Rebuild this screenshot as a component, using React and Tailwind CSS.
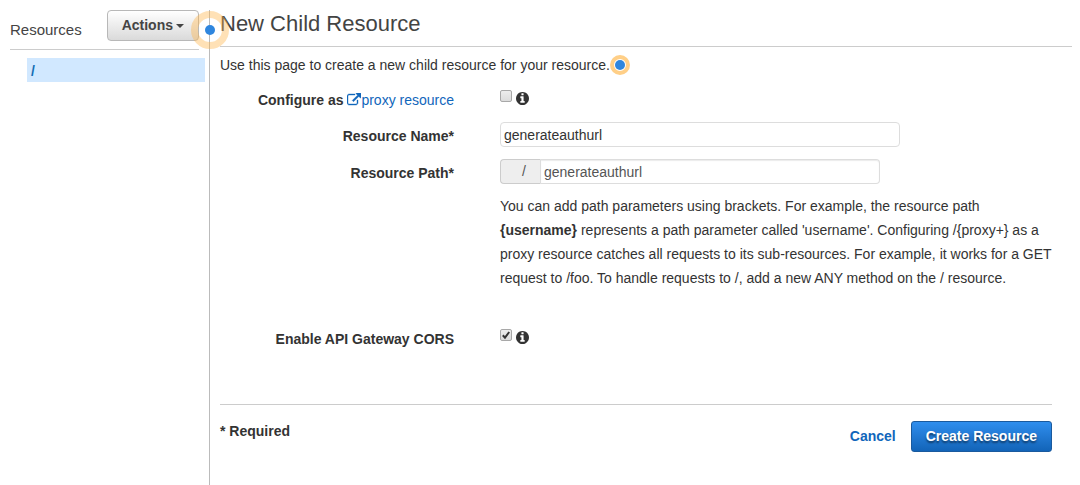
import { useState } from "react";

function InfoIcon() {
  return (
    <svg viewBox="128 128 1536 1536" className="size-[13px] shrink-0" fill="currentColor" role="img" aria-label="Information">
      <path d="M1152 1376v-160q0-14-9-23t-23-9h-96v-512q0-14-9-23t-23-9h-320q-14 0-23 9t-9 23v160q0 14 9 23t23 9h96v320h-96q-14 0-23 9t-9 23v160q0 14 9 23t23 9h448q14 0 23-9t9-23zm-128-896v-160q0-14-9-23t-23-9h-192q-14 0-23 9t-9 23v160q0 14 9 23t23 9h192q14 0 23-9t9-23zm640 416q0 209-103 385.5t-279.5 279.5-385.5 103-385.5-103-279.5-279.5-103-385.5 103-385.5 279.5-279.5 385.5-103 385.5 103 279.5 279.5 103 385.5z" />
    </svg>
  );
}

function ExternalLinkIcon() {
  return (
    <svg
      viewBox="0 0 1792 1792"
      className="inline-block size-3.5 align-[-2px]"
      fill="currentColor"
      stroke="currentColor"
      strokeWidth="50"
      aria-hidden="true"
    >
      <path d="M1408 928v320q0 119-84.5 203.5t-203.5 84.5h-832q-119 0-203.5-84.5t-84.5-203.5v-832q0-119 84.5-203.5t203.5-84.5h704q14 0 23 9t9 23v64q0 14-9 23t-23 9h-704q-66 0-113 47t-47 113v832q0 66 47 113t113 47h832q66 0 113-47t47-113v-320q0-14 9-23t23-9h64q14 0 23 9t9 23zm384-864v512q0 26-19 45t-45 19-45-19l-176-176-652 652q-10 10-23 10t-23-10l-114-114q-10-10-10-23t10-23l652-652-176-176q-19-19-19-45t19-45 45-19h512q26 0 45 19t19 45z" />
    </svg>
  );
}

function CheckBox({ id, label, checked, onChange }) {
  return (
    <span className="relative flex size-3 shrink-0">
      <input
        id={id}
        type="checkbox"
        aria-label={label}
        checked={checked}
        onChange={(e) => onChange(e.target.checked)}
        className="size-3 appearance-none rounded-xs border border-[#a8a8a8] bg-linear-to-b from-[#ededed] to-[#dcdcdc]"
      />
      {checked && (
        <svg viewBox="0 0 12 12" className="pointer-events-none absolute inset-0 size-3" fill="none" stroke="#333" strokeWidth="2" aria-hidden="true">
          <path d="M2.8 6.2 5 8.6 9.2 3" />
        </svg>
      )}
    </span>
  );
}

function CheckRow({ label, id, name, checked, onChange }) {
  return (
    <div className="flex gap-[46px]">
      <label htmlFor={id} className="w-[234px] shrink-0 text-right font-bold leading-6">
        {label}
      </label>
      <div className="flex min-w-0 flex-1 gap-1 pt-0.5">
        <CheckBox id={id} label={name} checked={checked} onChange={onChange} />
        <span className="pt-0.5">
          <InfoIcon />
        </span>
      </div>
    </div>
  );
}

function FieldRow({ label, htmlFor, children }) {
  return (
    <div className="flex gap-[46px]">
      <label htmlFor={htmlFor} className="w-[234px] shrink-0 pt-0.5 text-right font-bold leading-6">
        {label}
      </label>
      <div className="min-w-0 flex-1">{children}</div>
    </div>
  );
}

export default function App() {
  const [proxy, setProxy] = useState(false);
  const [cors, setCors] = useState(true);
  const [name, setName] = useState("generateauthurl");
  const [path, setPath] = useState("generateauthurl");

  return (
    <div className="flex min-h-screen bg-white pt-2.5 font-['Liberation_Sans',Arial,sans-serif] text-sm text-[#333]">
      <aside className="relative w-[210px] shrink-0 border-r border-[#bbb] pl-2.5">
        <div className="mr-2.5 flex h-10 items-start justify-between border-b border-[#ccc]">
          <h2 className="pt-2 text-[15px] leading-6 text-[#444]">Resources</h2>
          <button
            type="button"
            className="flex h-[31px] items-center gap-[3px] rounded-sm border border-[#b8b8b8] bg-linear-to-b from-white to-[#dadada] px-3.5 pb-px font-bold text-[#444]"
          >
            Actions
            <svg viewBox="0 0 8 4" className="mt-0.5 h-1 w-2" fill="currentColor" aria-hidden="true">
              <path d="M0 0h8L4 4z" />
            </svg>
          </button>
        </div>
        <nav className="mt-2 mr-1 ml-[17px]">
          <a href="#root" className="block bg-[#d1e8ff] px-1 pt-0.5 text-sm font-bold leading-[22px] text-[#146eb4]">
            /
          </a>
        </nav>
        <span className="absolute top-px -right-5 z-10 flex size-[38px] items-center justify-center rounded-full border-7 border-[#ffb548]/40">
          <span className="size-2.5 rounded-full bg-[#2f86de]" />
        </span>
      </aside>

      <main className="min-w-0 flex-1 pl-2.5">
        <h1 className="mr-2 border-b border-[#ccc] pb-2 text-[22px] leading-7 text-[#444]">New Child Resource</h1>
        <p className="mt-1.5 flex items-center leading-6">
          Use this page to create a new child resource for your resource.
          <span className="flex size-5 items-center justify-center rounded-full border-4 border-[#ffcf87] bg-white">
            <span className="size-2.5 rounded-full bg-[#2f86de]" />
          </span>
        </p>

        <form className="mr-7" onSubmit={(e) => e.preventDefault()}>
          <div className="mt-[11px] flex flex-col">
            <CheckRow
              id="proxy"
              name="Configure as proxy resource"
              checked={proxy}
              onChange={setProxy}
              label={
                <>
                  Configure as{" "}
                  <a href="#proxy" className="font-normal text-[#1166bb]">
                    <ExternalLinkIcon />
                    proxy resource
                  </a>
                </>
              }
            />

            <div className="mt-2.5">
              <FieldRow label="Resource Name*" htmlFor="name">
                <input
                  id="name"
                  type="text"
                  value={name}
                  onChange={(e) => setName(e.target.value)}
                  className="block h-[25px] w-full max-w-[400px] rounded-sm border border-[#ddd] px-[3px]"
                />
              </FieldRow>
            </div>

            <div className="mt-[11px]">
              <FieldRow label="Resource Path*" htmlFor="path">
                <div className="flex h-[25px] w-full max-w-[380px]">
                  <span className="w-[41px] shrink-0 rounded-l-sm border border-[#ccc] border-r-[#ddd] bg-[#eee] pr-3.5 text-right leading-[22px] text-[#555]">
                    /
                  </span>
                  <input
                    id="path"
                    type="text"
                    value={path}
                    onChange={(e) => setPath(e.target.value)}
                    className="min-w-0 flex-1 rounded-r-sm border border-l-0 border-[#ddd] px-[3px] text-[#555] shadow-[inset_0_1px_1px_rgba(0,0,0,0.08)]"
                  />
                </div>
                <p className="mt-2.5 leading-6">
                  You can add path parameters using brackets. For example, the resource path <b>{"{username}"}</b>{" "}
                  represents a path parameter called 'username'. Configuring {"/{proxy+}"} as a proxy resource catches
                  all requests to its sub-resources. For example, it works for a GET request to /foo. To handle
                  requests to /, add a new ANY method on the / resource.
                </p>
              </FieldRow>
            </div>

            <div className="mt-[37px]">
              <CheckRow
                id="cors"
                name="Enable API Gateway CORS"
                label="Enable API Gateway CORS"
                checked={cors}
                onChange={setCors}
              />
            </div>
          </div>

          <div className="mt-[53px] flex items-start justify-between border-t border-[#ccc] pt-4">
            <p className="font-bold leading-5">* Required</p>
            <div className="flex items-center gap-[15px]">
              <button type="button" className="pb-px font-bold text-[#1166bb]">
                Cancel
              </button>
              <button
                type="submit"
                className="h-[31px] rounded-[3px] border border-[#1a5a9e] bg-linear-to-b from-[#2f8eee] to-[#1264b8] px-3.5 pb-0.5 font-bold text-white [text-shadow:0_2px_2px_rgba(0,0,0,0.5)]"
              >
                Create Resource
              </button>
            </div>
          </div>
        </form>
      </main>
    </div>
  );
}
